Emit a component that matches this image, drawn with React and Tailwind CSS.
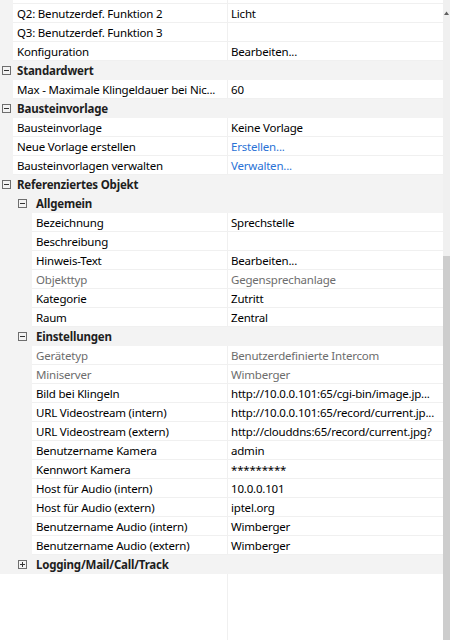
import React from "react";

const rows = [
  { t: "row", lvl: 1, n: "Q2: Benutzerdef. Funktion 2", v: "Licht" },
  { t: "row", lvl: 1, n: "Q3: Benutzerdef. Funktion 3", v: "" },
  { t: "row", lvl: 1, n: "Konfiguration", v: "Bearbeiten..." },
  { t: "cat", lvl: 0, n: "Standardwert" },
  { t: "row", lvl: 1, n: "Max - Maximale Klingeldauer bei Nic...", v: "60" },
  { t: "cat", lvl: 0, n: "Bausteinvorlage" },
  { t: "row", lvl: 1, n: "Bausteinvorlage", v: "Keine Vorlage" },
  { t: "row", lvl: 1, n: "Neue Vorlage erstellen", v: "Erstellen...", link: true },
  { t: "row", lvl: 1, n: "Bausteinvorlagen verwalten", v: "Verwalten...", link: true },
  { t: "cat", lvl: 0, n: "Referenziertes Objekt" },
  { t: "cat", lvl: 1, n: "Allgemein" },
  { t: "row", lvl: 2, n: "Bezeichnung", v: "Sprechstelle" },
  { t: "row", lvl: 2, n: "Beschreibung", v: "" },
  { t: "row", lvl: 2, n: "Hinweis-Text", v: "Bearbeiten..." },
  { t: "row", lvl: 2, n: "Objekttyp", v: "Gegensprechanlage", dis: true },
  { t: "row", lvl: 2, n: "Kategorie", v: "Zutritt" },
  { t: "row", lvl: 2, n: "Raum", v: "Zentral" },
  { t: "cat", lvl: 1, n: "Einstellungen" },
  { t: "row", lvl: 2, n: "Gerätetyp", v: "Benutzerdefinierte Intercom", dis: true },
  { t: "row", lvl: 2, n: "Miniserver", v: "Wimberger", dis: true },
  { t: "row", lvl: 2, n: "Bild bei Klingeln", v: "http://10.0.0.101:65/cgi-bin/image.jp..." },
  { t: "row", lvl: 2, n: "URL Videostream (intern)", v: "http://10.0.0.101:65/record/current.jp..." },
  { t: "row", lvl: 2, n: "URL Videostream (extern)", v: "http://clouddns:65/record/current.jpg?" },
  { t: "row", lvl: 2, n: "Benutzername Kamera", v: "admin" },
  { t: "row", lvl: 2, n: "Kennwort Kamera", v: "*********" },
  { t: "row", lvl: 2, n: "Host für Audio (intern)", v: "10.0.0.101" },
  { t: "row", lvl: 2, n: "Host für Audio (extern)", v: "iptel.org" },
  { t: "row", lvl: 2, n: "Benutzername Audio (intern)", v: "Wimberger" },
  { t: "row", lvl: 2, n: "Benutzername Audio (extern)", v: "Wimberger" },
  { t: "cat", lvl: 1, n: "Logging/Mail/Call/Track", closed: true },
];

function Toggle({ closed }) {
  return (
    <svg width="9" height="9" viewBox="0 0 9 9" className="shrink-0">
      <rect x="0.5" y="0.5" width="8" height="8" fill="none" stroke="#6e6e6e" strokeWidth="1" />
      <line x1="2" y1="4.5" x2="7" y2="4.5" stroke="#333" strokeWidth="1" />
      {closed && <line x1="4.5" y1="2" x2="4.5" y2="7" stroke="#333" strokeWidth="1" />}
    </svg>
  );
}

function Row({ r }) {
  if (r.t === "cat") {
    return (
      <div className="flex h-[19px] items-center bg-[#f3f3f3]">
        <div className={r.lvl === 0 ? "w-[17px] pl-[2px] flex items-center" : "w-[36px] pl-[18px] flex items-center"}>
          <Toggle closed={r.closed} />
        </div>
        <span className="font-bold text-[#1e1e1e] whitespace-nowrap pt-px">{r.n}</span>
      </div>
    );
  }
  const indent = r.lvl === 1 ? "w-[13px]" : "w-[32px]";
  const nameW = r.lvl === 1 ? "w-[214px]" : "w-[195px]";
  const col = r.dis ? "text-[#6d6d6d]" : "text-[#000]";
  const vcol = r.dis ? "text-[#6d6d6d]" : r.link ? "text-[#2a72d6]" : "text-[#000]";
  return (
    <div className="flex h-[19px] bg-[#f3f3f3]">
      <div className={`${indent} shrink-0`} />
      <div className="flex flex-1 bg-white border-b border-[#f0f0f0] min-w-0">
        <div className={`${nameW} shrink-0 pl-[4px] pt-px leading-[17px] whitespace-nowrap overflow-hidden ${col}`}>{r.n}</div>
        <div className={`flex-1 border-l border-[#f0f0f0] pl-[3px] pt-px leading-[17px] whitespace-nowrap overflow-hidden ${vcol}`}>{r.v}</div>
      </div>
    </div>
  );
}

export default function App() {
  return (
    <div
      className="w-[450px] h-[640px] flex bg-white overflow-hidden text-[11.5px] tracking-[-0.2px]"
      style={{ fontFamily: '"Noto Sans", "Open Sans", sans-serif' }}
    >
      <div className="w-[443px] flex flex-col">
        <div className="flex h-[4px] bg-[#f3f3f3]">
          <div className="w-[13px] shrink-0" />
          <div className="flex flex-1 bg-white border-b border-[#f0f0f0]">
            <div className="w-[214px] shrink-0" />
            <div className="flex-1 border-l border-[#f0f0f0]" />
          </div>
        </div>
        {rows.map((r, i) => (
          <Row key={i} r={r} />
        ))}
        <div className="flex flex-1">
          <div className="w-[227px] shrink-0" />
          <div className="flex-1 border-l border-[#f0f0f0]" />
        </div>
      </div>
      <div className="w-[7px] flex flex-col bg-[#f0f0f0]">
        <div className="h-[256px] flex justify-center pt-[11px]">
          <svg width="5" height="4" viewBox="0 0 5 4">
            <path d="M0 4 L2.5 0.5 L5 4 Z" fill="#606060" />
          </svg>
        </div>
        <div className="flex-1 bg-[#cdcdcd]" />
      </div>
    </div>
  );
}
